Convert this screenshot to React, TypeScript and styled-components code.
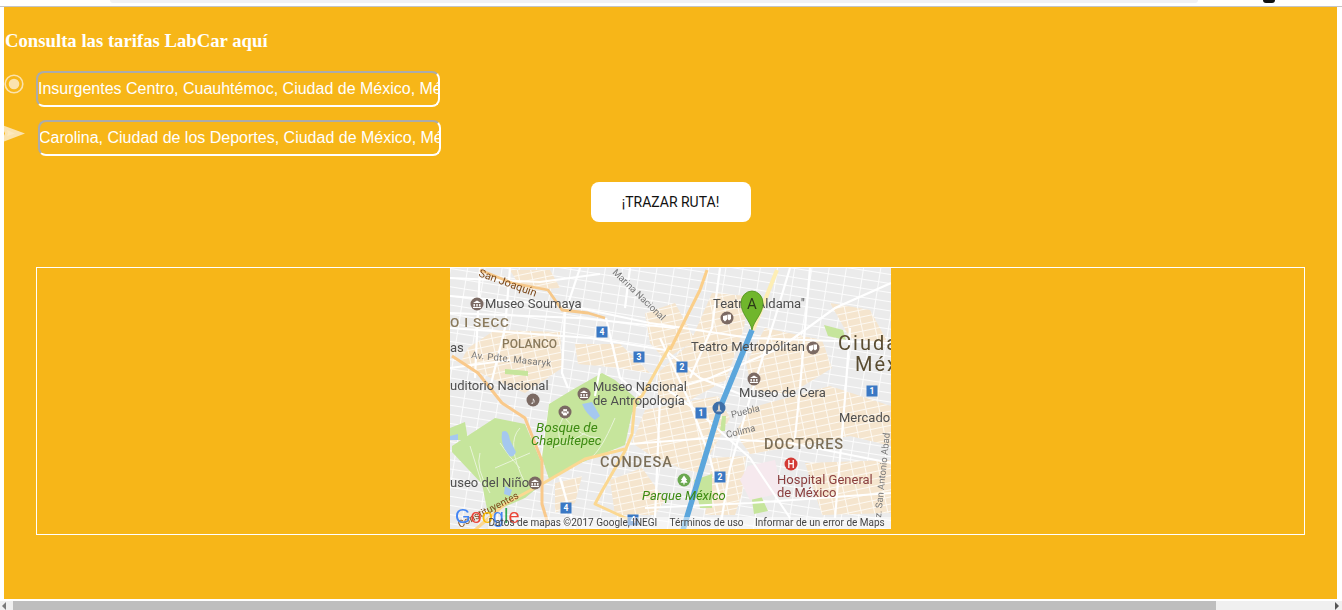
import React from "react";
import styled, { createGlobalStyle } from "styled-components";

const Global = createGlobalStyle`
  html, body { margin: 0; padding: 0; background: #fff; overflow: hidden; }
  #root { width: 1342px; height: 610px; }
`;

const Page = styled.div`
  width: 1342px;
  height: 610px;
  display: flex;
  flex-direction: column;
  overflow: hidden;
`;

const BrowserEdge = styled.div`
  height: 6px;
  flex: none;
  display: flex;
  align-items: flex-start;
  background: #fff;
  border-bottom: 1px solid #c4c4c4;
`;

const AddressBar = styled.div`
  width: 1088px;
  height: 3px;
  margin-left: 110px;
  background: #f1f1f4;
  border-radius: 0 0 8px 8px;
`;

const ProfileDot = styled.div`
  width: 12px;
  height: 3px;
  margin-left: 65px;
  background: #111;
  border-radius: 0 0 5px 5px;
`;

const Main = styled.main`
  width: 1333px;
  height: 592px;
  flex: none;
  margin-left: 4px;
  padding-top: 23px;
  box-sizing: border-box;
  background: #f7b618;
  display: flex;
  flex-direction: column;
  overflow: hidden;
`;

const Heading = styled.h3`
  margin: 0 0 0 1px;
  height: 22px;
  font: bold 18.72px/21px "Liberation Serif", serif;
  color: #fff;
`;

const Row = styled.div<{ $gap: number; $gutter: number; $iconTop: number }>`
  margin-top: ${(p) => p.$gap}px;
  height: 36px;
  display: flex;
  align-items: flex-start;
  & > svg {
    flex: none;
    width: ${(p) => p.$gutter}px;
    height: 24px;
    margin-top: ${(p) => p.$iconTop}px;
  }
`;

const AddressInput = styled.input<{ $width: number; $indent: number }>`
  width: ${(p) => p.$width}px;
  height: 36px;
  box-sizing: border-box;
  padding: 0;
  text-indent: ${(p) => p.$indent}px;
  background: transparent;
  border: 2px solid;
  border-color: #ababab #fff #fff #ababab;
  border-radius: 8px;
  outline: none;
  color: #fff;
  font: 16px "Liberation Sans", Arial, sans-serif;
`;

const RouteButton = styled.button`
  align-self: center;
  width: 160px;
  height: 40px;
  margin-top: 26px;
  padding: 0;
  border: none;
  border-radius: 8px;
  background: #fff;
  color: #111;
  font: 14px Roboto, sans-serif;
`;

const MapFrame = styled.section`
  width: 1269px;
  height: 268px;
  box-sizing: border-box;
  margin: 45px 0 0 32px;
  border: 1px solid #fff;
  display: flex;
  justify-content: center;
  align-items: flex-start;
`;

const MapCanvas = styled.svg`
  width: 441px;
  height: 261px;
  flex: none;
  display: block;
  font-family: Roboto, sans-serif;
  filter: blur(0.3px);
`;

const ScrollBar = styled.div`
  height: 9px;
  flex: none;
  margin-top: 2px;
  background: #f0f0f0;
  display: flex;
  align-items: center;
  position: relative;
`;

const ScrollThumb = styled.div`
  width: 1203px;
  height: 100%;
  margin-left: 13px;
  background: #bebebe;
`;

const ArrowLeft = styled.span`
  position: absolute;
  left: 2px;
  top: 1px;
  border-style: solid;
  border-width: 4px 4px 4px 0;
  border-color: transparent #7a7a7a transparent transparent;
`;

const ArrowRight = styled.span`
  position: absolute;
  right: 3px;
  top: 1px;
  border-style: solid;
  border-width: 4px 0 4px 4px;
  border-color: transparent transparent transparent #555;
`;

const pts = (a: number[][]) => a.map((p) => p.join(",")).join(" ");

const TAN = [
  [[45, 62], [110, 64], [112, 100], [75, 125], [45, 112], [10, 95], [18, 80]],
  [[60, 2], [100, 2], [110, 20], [72, 22]],
  [[125, 76], [170, 76], [200, 105], [170, 100], [128, 96]],
  [[195, 45], [225, 35], [245, 72], [215, 92], [200, 75]],
  [[262, 25], [298, 28], [294, 60], [276, 112], [240, 132], [208, 135], [208, 105], [240, 75]],
  [[315, 60], [372, 72], [382, 100], [340, 126], [302, 122], [296, 95]],
  [[380, 35], [420, 42], [438, 75], [400, 70]],
  [[195, 142], [268, 128], [280, 150], [250, 205], [230, 200], [205, 190], [182, 175]],
  [[300, 140], [380, 118], [441, 138], [441, 178], [400, 168], [360, 176], [300, 186], [285, 165]],
  [[355, 195], [441, 192], [441, 245], [372, 247], [365, 225]],
  [[262, 190], [296, 188], [292, 225], [285, 247], [255, 247]],
  [[160, 212], [192, 200], [215, 232], [205, 247], [165, 247]],
  [[105, 215], [132, 208], [125, 235], [105, 245]],
];

const PARKS = [
  [[122, 122], [152, 105], [165, 112], [190, 134], [182, 145], [175, 177], [128, 196], [99, 211], [92, 190], [99, 136]],
  [[2, 178], [45, 150], [75, 156], [92, 196], [92, 216], [75, 230], [38, 246], [32, 216], [2, 184]],
  [[0, 160], [15, 154], [18, 172], [0, 172]],
  [[374, 57], [393, 62], [396, 72], [378, 68]],
  [[55, 101], [78, 103], [78, 108], [55, 106]],
  [[300, 218], [306, 217], [318, 243], [304, 246]],
  [[272, 148], [276, 148], [275, 163], [270, 163]],
  [[244, 212], [262, 206], [262, 240], [250, 240]],
];

const WHITE_ROADS = [
  "M0 28 L120 38 L200 55 L300 70 L441 75",
  "M0 60 L140 70 L215 82",
  "M0 45 L130 50 L225 60",
  "M130 0 L115 45 L112 105 L118 120",
  "M156 50 L170 110 L194 130",
  "M215 82 L250 110 L300 130",
  "M441 15 L385 40 L330 80 L260 110 L220 122",
  "M340 0 L325 50 L300 130 L280 200 L270 261",
  "M180 0 L175 40",
  "M0 100 L60 92",
  "M110 210 L125 261",
  "M218 122 L250 145 L300 190 L340 250",
  "M210 70 L240 135 L260 190 L270 230",
  "M180 176 L260 170 L340 175 L441 195",
  "M195 240 L300 235 L441 225",
  "M400 60 L395 130 L385 250",
  "M60 0 L55 60 L40 120",
  "M30 0 L25 110",
  "M150 100 L145 128",
  "M0 10 L90 14 L150 6",
  "M270 0 L262 60 L240 110",
  "M360 0 L350 120 L345 170",
  "M210 130 L205 250",
];

const PARK_PATHS =
  "M115 150 Q130 170 150 170 M100 180 Q120 175 135 165 M50 175 Q60 190 70 200 M45 200 L80 185 " +
  "M120 140 Q105 155 110 175 M165 150 Q150 185 140 190 M30 185 Q25 200 40 225 M20 178 L32 216 M70 160 Q55 175 75 215";

const ORANGE_ROADS = [
  { d: "M30 2 L62 15 L98 22 L112 42 L138 45 L155 50", w: 2.8, c: "#f6c88a" },
  { d: "M220 78 L192 128 L185 133 L182 166 L175 183 L152 223 L145 236 L182 253", w: 3, c: "#fbd892" },
  { d: "M175 181 L135 191 L92 216 L55 236 L25 262", w: 3, c: "#fbd892" },
  { d: "M2 88 L28 105 L52 135 L75 150 L92 193 L92 236 L98 256", w: 3, c: "#f9c98b" },
  { d: "M257 2 L250 22 L220 82", w: 3, c: "#fbcf8a" },
  { d: "M327 2 L303 62", w: 4, c: "#fdeeb5" },
];

const WATER = [
  "M52 164 Q58 160 60 172 L66 184 Q62 192 58 186 Q50 176 52 164 Z",
  "M132 136 L142 134 L150 148 L145 152 Q136 146 132 136 Z",
  "M55 218 L62 222 L60 228 L54 226 Z",
  "M0 168 L8 166 L8 172 L0 172 Z",
];

type Label = {
  x: number;
  y: number;
  text: string;
  size?: number;
  color?: string;
  weight?: number;
  italic?: boolean;
  spacing?: number;
  rotate?: number;
};

const LABELS: Label[] = [
  { x: 28, y: 8, text: "San Joaquín", size: 11, color: "#7d4a1c", rotate: 20 },
  { x: 162, y: 5, text: "Marina Nacional", size: 9.5, color: "#777", rotate: 44 },
  { x: 35, y: 40, text: "Museo Soumaya", size: 13 },
  { x: 0, y: 59, text: "O I SECC", size: 13.5, color: "#8a7a5c", weight: 500, spacing: 0.8 },
  { x: 52, y: 80, text: "POLANCO", size: 12, color: "#8a7a5c", weight: 500 },
  { x: 0, y: 84, text: "as", size: 13 },
  { x: 21, y: 90, text: "Av. Pdte. Masaryk", size: 9.5, color: "#777", rotate: 6, spacing: 0.3 },
  { x: 0, y: 122, text: "uditorio Nacional", size: 13 },
  { x: 143, y: 123, text: "Museo Nacional", size: 13 },
  { x: 143, y: 137, text: "de Antropología", size: 13 },
  { x: 86, y: 164, text: "Bosque de", size: 13.5, color: "#3d8a12", italic: true },
  { x: 81, y: 177, text: "Chapultepec", size: 13, color: "#3d8a12", italic: true },
  { x: 0, y: 219, text: "useo del Niño", size: 13 },
  { x: 150, y: 199, text: "CONDESA", size: 14.5, color: "#7c6f58", weight: 500, spacing: 1 },
  { x: 192, y: 232, text: "Parque México", size: 13, color: "#3d8a12", italic: true },
  { x: 263, y: 40, text: "Teatro \"Aldama\"", size: 13 },
  { x: 241, y: 83, text: "Teatro Metropólitan", size: 13 },
  { x: 388, y: 82, text: "Ciudad", size: 20, color: "#5a4d32", spacing: 2 },
  { x: 405, y: 103, text: "México", size: 20, color: "#5a4d32", spacing: 2 },
  { x: 289, y: 129, text: "Museo de Cera", size: 13 },
  { x: 389, y: 154, text: "Mercado", size: 13 },
  { x: 282, y: 150, text: "Puebla", size: 9.5, color: "#777", rotate: -14 },
  { x: 277, y: 170, text: "Colima", size: 9.5, color: "#777", rotate: -14 },
  { x: 314, y: 181, text: "DOCTORES", size: 14.5, color: "#7c6f58", weight: 500, spacing: 0.8 },
  { x: 327, y: 216, text: "Hospital General", size: 13, color: "#8a3f3f" },
  { x: 327, y: 229, text: "de México", size: 13, color: "#8a3f3f" },
  { x: 431, y: 250, text: "z. San Antonio Abad", size: 9.5, color: "#777", rotate: -84 },
  { x: 10, y: 260, text: "Constituyentes", size: 10, color: "#7d4a1c", rotate: -27 },
];

const BADGES: [number, number, string][] = [
  [152, 64, "4"],
  [189, 89, "3"],
  [232, 99, "2"],
  [422, 123, "1"],
  [251, 145, "1"],
  [270, 209, "2"],
  [116, 240, "4"],
  [183, 252, "4"],
];

const Museum = ({ x, y }: { x: number; y: number }) => (
  <g transform={`translate(${x} ${y})`}>
    <circle r="6.5" fill="#7b6a63" />
    <path d="M-4 -1 L0 -3.5 L4 -1 Z M-3.5 0 h1.4 v2.5 h-1.4 Z M-0.7 0 h1.4 v2.5 h-1.4 Z M2.1 0 h1.4 v2.5 h-1.4 Z M-4 3 h8 v1 h-8 Z" fill="#fff" />
  </g>
);

const Theatre = ({ x, y }: { x: number; y: number }) => (
  <g transform={`translate(${x} ${y})`}>
    <circle r="6.5" fill="#7b6a63" />
    <path d="M-4 -2 L0 -3 L0 1.5 L-2 3.5 L-4 1.5 Z M0.5 -3.5 L4 -3.5 L4 1 L2 2.5 L0.5 1 Z" fill="#fff" />
  </g>
);

const MapPicture = () => (
  <MapCanvas viewBox="0 0 441 261" aria-label="Mapa de la ruta">
    <defs>
      <pattern id="streets" width="17" height="9" patternUnits="userSpaceOnUse" patternTransform="rotate(9)">
        <rect width="17" height="9" fill="#ebebeb" />
        <path d="M0 0.5 H17 M0.5 0 V9" stroke="#fcfcfc" strokeWidth="1" />
      </pattern>
      <pattern id="blocks" width="13" height="7" patternUnits="userSpaceOnUse" patternTransform="rotate(-12)">
        <rect width="13" height="7" fill="#fdf9f2" />
        <rect x="1" y="1" width="12" height="6" fill="#f5e5ce" />
      </pattern>
    </defs>
    <rect width="441" height="261" fill="url(#streets)" />
    {TAN.map((a, i) => (
      <polygon key={i} points={pts(a)} fill="url(#blocks)" />
    ))}
    {PARKS.map((a, i) => (
      <polygon key={i} points={pts(a)} fill="#c6e59c" />
    ))}
    <path d={PARK_PATHS} stroke="#e8f4d8" strokeWidth="1" fill="none" />
    {WATER.map((d, i) => (
      <path key={i} d={d} fill="#a5c8ef" />
    ))}
    <polygon points={pts([[298, 198], [325, 192], [332, 225], [300, 232], [290, 212]])} fill="#f6e9ee" />
    {WHITE_ROADS.map((d, i) => (
      <path key={i} d={d} stroke="#fff" strokeWidth="2.2" fill="none" />
    ))}
    {ORANGE_ROADS.map((r, i) => (
      <path key={i} d={r.d} stroke={r.c} strokeWidth={r.w} fill="none" strokeLinejoin="round" />
    ))}
    <path d="M302 62 L270 140 L233 262" stroke="#5ba6dc" strokeWidth="5.5" fill="none" />
    {LABELS.map((l, i) => (
      <text
        key={i}
        x={l.x}
        y={l.y}
        fontSize={l.size}
        fill={l.color ?? "#4f4f4f"}
        fontWeight={l.weight ?? 400}
        fontStyle={l.italic ? "italic" : "normal"}
        letterSpacing={l.spacing ?? 0}
        transform={l.rotate ? `rotate(${l.rotate} ${l.x} ${l.y})` : undefined}
      >
        {l.text}
      </text>
    ))}
    {BADGES.map(([x, y, t], i) => (
      <g key={i} transform={`translate(${x} ${y})`}>
        <rect x="-5.5" y="-5.5" width="11" height="11" fill="#3a78c4" />
        <text y="3" textAnchor="middle" fontSize="8.5" fontWeight="700" fill="#fff">
          {t}
        </text>
      </g>
    ))}
    <Museum x={27} y={36} />
    <Museum x={134} y={126} />
    <Museum x={85} y={215} />
    <Museum x={304} y={111} />
    <Theatre x={277} y={50} />
    <Theatre x={363} y={80} />
    <g transform="translate(83 132)">
      <circle r="6.5" fill="#7b6a63" />
      <text y="3.5" textAnchor="middle" fontSize="10" fill="#fff">♪</text>
    </g>
    <g transform="translate(115 144)">
      <circle r="6.5" fill="#7b6a63" />
      <path d="M-2.6 -0.8 a1 1.3 0 1 0 .1 0 Z M-0.9 -3 a1 1.3 0 1 0 .1 0 Z M1 -3 a1 1.3 0 1 0 .1 0 Z M2.7 -0.8 a1 1.3 0 1 0 .1 0 Z M0 0.3 C2 0.3 3 3.4 1.2 3.4 L-1.2 3.4 C-3 3.4 -2 0.3 0 0.3 Z" fill="#fff" />
    </g>
    <g transform="translate(234 212)">
      <circle r="6.5" fill="#6aa84f" />
      <path d="M0 -4.5 L3.2 0 L1.8 0 L3.6 2.8 L0.6 2.8 V4.5 H-0.6 V2.8 L-3.6 2.8 L-1.8 0 L-3.2 0 Z" fill="#fff" />
    </g>
    <g transform="translate(269 140)">
      <circle r="6.5" fill="#3f6fa8" />
      <path d="M0 -4.5 L1 -1 L1 1.5 L3 3.5 H-3 L-1 1.5 L-1 -1 Z" fill="#d8d0c8" />
    </g>
    <g transform="translate(341 196)">
      <circle r="6.5" fill="#d33b35" />
      <text y="3.6" textAnchor="middle" fontSize="10" fontWeight="500" fill="#fff">H</text>
    </g>
    <path d="M302 62 C300 52 291 46 291 35 A11 12 0 0 1 313 35 C313 46 304 52 302 62 Z" fill="#70b62c" stroke="#4f8f1c" strokeWidth="0.8" />
    <text x="302" y="41" textAnchor="middle" fontSize="15" fill="#2c3a18">A</text>
    <rect x="38" y="249" width="403" height="12" fill="#fff" fillOpacity="0.5" />
    <text x="5" y="255" fontSize="20" fontWeight="500" fontFamily="'Liberation Sans', sans-serif">
      <tspan fill="#4285f4">G</tspan>
      <tspan fill="#ea4335">o</tspan>
      <tspan fill="#fbbc05">o</tspan>
      <tspan fill="#4285f4">g</tspan>
      <tspan fill="#34a853">l</tspan>
      <tspan fill="#ea4335">e</tspan>
    </text>
    <g fontSize="10" fill="#444">
      <text x="38.5" y="258">Datos de mapas ©2017 Google, INEGI</text>
      <text x="219.5" y="258">Términos de uso</text>
      <text x="305" y="258">Informar de un error de Maps</text>
    </g>
  </MapCanvas>
);

export default function App() {
  return (
    <Page>
      <Global />
      <BrowserEdge>
        <AddressBar />
        <ProfileDot />
      </BrowserEdge>
      <Main>
        <Heading>Consulta las tarifas LabCar aquí</Heading>
        <Row $gap={19} $gutter={32} $iconTop={3}>
          <svg viewBox="0 0 32 24" aria-hidden="true">
            <circle cx="10" cy="10" r="8.8" fill="none" stroke="#fbe3ae" strokeWidth="1.6" />
            <circle cx="10" cy="10" r="5.3" fill="#fbe3ae" />
          </svg>
          <AddressInput $width={404} $indent={0} readOnly value="Insurgentes Centro, Cuauhtémoc, Ciudad de México, México" />
        </Row>
        <Row $gap={13} $gutter={34} $iconTop={5}>
          <svg viewBox="0 0 34 24" aria-hidden="true">
            <path d="M-3 -0.5 L21 8.5 L-3 17.5 L1 8.5 Z" fill="#fbe3ae" />
            <path d="M3 5 L11 8.5 L3 11 L4 8.5 Z" fill="#fde9bd" />
          </svg>
          <AddressInput $width={403} $indent={-1} readOnly value="Carolina, Ciudad de los Deportes, Ciudad de México, México" />
        </Row>
        <RouteButton type="button">¡TRAZAR RUTA!</RouteButton>
        <MapFrame>
          <MapPicture />
        </MapFrame>
      </Main>
      <ScrollBar>
        <ArrowLeft />
        <ScrollThumb />
        <ArrowRight />
      </ScrollBar>
    </Page>
  );
}
